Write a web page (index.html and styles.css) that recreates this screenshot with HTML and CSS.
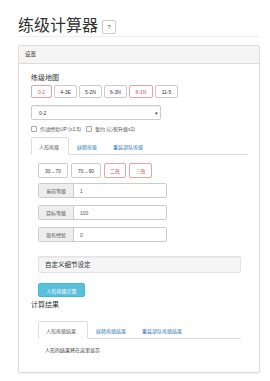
FILE: index.html
```html
<!DOCTYPE html>
<html lang="zh">
<head>
<meta charset="utf-8">
<link rel="stylesheet" href="styles.css">
</head>
<body>
<div class="container">
  <div class="page-header">
    <h1 class="title">练级计算器</h1>
    <span class="help-btn">?</span>
  </div>
  <div class="panel">
    <div class="panel-heading">设置</div>
    <div class="panel-body">
      <div class="label-lg">练级地图</div>
      <div class="btn-row">
        <span class="btn btn-red w21">0-2</span>
        <span class="btn w23">4-3E</span>
        <span class="btn w23">5-2N</span>
        <span class="btn w23">6-3N</span>
        <span class="btn btn-red w24">8-1N</span>
        <span class="btn w23">11-5</span>
      </div>
      <div class="select"><span>0-2</span><span class="caret">▾</span></div>
      <div class="checks">
        <span class="check"><span class="box"></span>作战经验UP (x1.5)</span>
        <span class="check"><span class="box"></span>誓约 (心智升级x2)</span>
      </div>
      <div class="tabs tabs-top">
        <span class="tab active t1">人形练级</span>
        <span class="tab">妖精练级</span>
        <span class="tab">重装部队练级</span>
      </div>
      <div class="tab-pane">
        <div class="btn-row2">
          <span class="btn2 w30">30→70</span>
          <span class="btn2 w30">70→90</span>
          <span class="btn2 btn-red w22">二改</span>
          <span class="btn2 btn-red w23">三改</span>
        </div>
        <div class="igroup"><span class="addon">当前等级</span><span class="ival">1</span></div>
        <div class="igroup"><span class="addon">目标等级</span><span class="ival">100</span></div>
        <div class="igroup"><span class="addon">现有经验</span><span class="ival">0</span></div>
        <div class="custom">自定义细节设定</div>
        <span class="calc-btn">人形练级计算</span>
      </div>
      <div class="label-lg result-title">计算结果</div>
      <div class="result">
        <div class="tabs tabs-res">
          <span class="tab active t2">人形练级结果</span>
          <span class="tab">妖精练级结果</span>
          <span class="tab">重装部队练级结果</span>
        </div>
        <div class="result-text">人形的结果将在这里显示</div>
      </div>
    </div>
  </div>
</div>
</body>
</html>
```
FILE: styles.css
```css
html, body {
  margin: 0;
  padding: 0;
  background: #fff;
}
body {
  font-family: "Liberation Sans", "Noto Sans CJK SC", sans-serif;
  color: #333;
  width: 270px;
  height: 381px;
  overflow: hidden;
}
.container {
  padding: 15px 10px 0 18px;
}
.page-header {
  display: flex;
  align-items: center;
  gap: 4px;
  height: 21px;
  border-bottom: 1px solid #eee;
}
.title {
  margin: 0;
  font-size: 16px;
  font-weight: 400;
  line-height: 20px;
  letter-spacing: 0px;
}
.help-btn {
  display: flex;
  align-items: center;
  justify-content: center;
  width: 12px;
  height: 12px;
  border: 1px solid #ccc;
  border-radius: 2px;
  font-size: 5px;
  color: #333;
  margin-top: 2px;
}
.panel {
  margin-top: 8px;
  border: 1px solid #ddd;
  border-radius: 2px;
  height: 326px;
  box-shadow: 0 1px 1px rgba(0,0,0,0.05);
}
.panel-heading {
  background: #f5f5f5;
  border-bottom: 1px solid #ddd;
  height: 17px;
  line-height: 17px;
  font-size: 5.5px;
  padding-left: 6px;
}
.panel-body {
  padding: 9px 0 0 12px;
}
.label-lg {
  font-size: 7px;
  line-height: 10px;
  height: 10px;
}
.btn-row {
  display: flex;
  gap: 2px;
  margin-top: 2px;
}
.btn, .btn2 {
  display: flex;
  align-items: center;
  justify-content: center;
  box-sizing: border-box;
  height: 13px;
  border: 1px solid #ccc;
  border-radius: 2px;
  font-size: 5px;
  color: #333;
  background: #fff;
}
.btn-red {
  border-color: #e8a3a1;
  color: #d9534f;
}
.w21 { width: 21px; }
.w22 { width: 22px; }
.w23 { width: 23px; }
.w24 { width: 24px; }
.w30 { width: 30px; }
.select {
  box-sizing: border-box;
  width: 130px;
  height: 15px;
  margin-top: 7px;
  border: 1px solid #ccc;
  border-radius: 2px;
  display: flex;
  align-items: center;
  justify-content: space-between;
  padding: 0 2px 0 7px;
  font-size: 5px;
  box-shadow: inset 0 1px 1px rgba(0,0,0,0.075);
}
.caret {
  font-size: 5px;
}
.checks {
  display: flex;
  gap: 5px;
  margin-top: 5px;
  height: 7px;
  align-items: center;
  font-size: 5px;
  color: #555;
}
.check {
  display: flex;
  align-items: center;
  gap: 3px;
}
.box {
  width: 4px;
  height: 4px;
  border: 1px solid #aaa;
  border-radius: 1px;
  background: #fafafa;
}
.tabs {
  display: flex;
  align-items: flex-end;
  border-bottom: 1px solid #ddd;
  font-size: 5px;
}
.tabs-top {
  margin-top: 4px;
  width: 217px;
  height: 18px;
}
.tab {
  color: #337ab7;
  padding: 0 7px;
  height: 18px;
  line-height: 18px;
  margin-bottom: -1px;
  border: 1px solid transparent;
  border-radius: 2px 2px 0 0;
  box-sizing: border-box;
}
.tab.active {
  color: #555;
  border-color: #ddd;
  border-bottom-color: #fff;
  background: #fff;
}
.t1 { width: 38px; }
.tab-pane {
  padding: 8px 0 0 7px;
}
.btn-row2 {
  display: flex;
  gap: 2px;
}
.btn2 {
  height: 15px;
  margin-right: 1px;
}
.igroup {
  display: flex;
  width: 129px;
  height: 15px;
  margin-top: 5px;
  box-sizing: border-box;
  border: 1px solid #ccc;
  border-radius: 2px;
  font-size: 5px;
}
.igroup + .igroup {
  margin-top: 7px;
}
.addon {
  width: 34px;
  background: #eee;
  border-right: 1px solid #ccc;
  display: flex;
  align-items: center;
  justify-content: center;
  color: #555;
}
.ival {
  display: flex;
  align-items: center;
  padding-left: 6px;
  color: #555;
}
.custom {
  box-sizing: border-box;
  width: 203px;
  height: 17px;
  margin-top: 14px;
  background: #f5f5f5;
  border: 1px solid #e3e3e3;
  border-radius: 2px;
  box-shadow: inset 0 1px 1px rgba(0,0,0,0.05);
  font-size: 6.5px;
  line-height: 15px;
  padding-left: 6px;
}
.calc-btn {
  display: flex;
  align-items: center;
  justify-content: center;
  width: 47px;
  height: 14px;
  margin-top: 10px;
  background: #5bc0de;
  border: 1px solid #46b8da;
  box-sizing: border-box;
  border-radius: 2px;
  color: #fff;
  font-size: 5px;
}
.result-title {
  margin-top: 3px;
}
.result {
  padding: 0 0 0 7px;
  margin-top: 10px;
}
.tabs-res {
  width: 203px;
  height: 18px;
}
.t2 { width: 50px; }
.result-text {
  font-size: 5px;
  padding: 7px 0 0 7px;
}
```
